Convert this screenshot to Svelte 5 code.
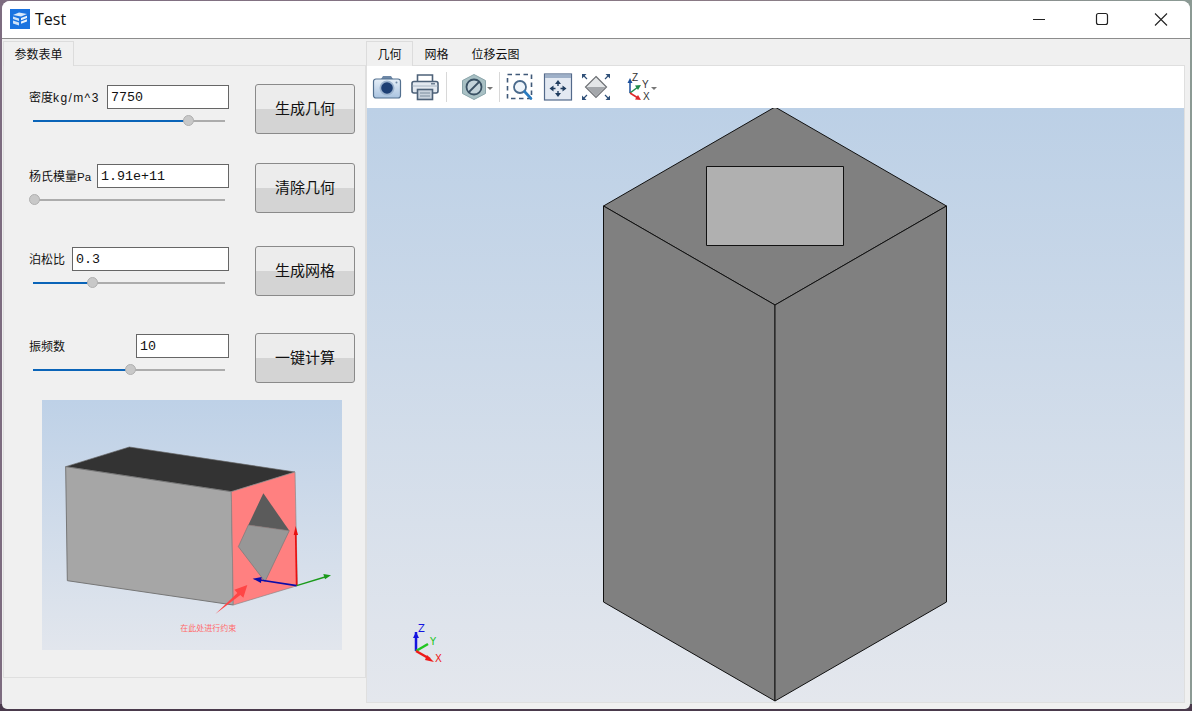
<script>
    // form rows on the left, gap is the space above each one
    const rows = [
        { label: '密度', unit: 'kg/m^3', stretch: true, value: '7750', inputW: 122, pct: 80, btn: '生成几何', gap: 18 },
        { label: '杨氏模量', unit: 'Pa', stretch: false, value: '1.91e+11', inputW: 132, pct: 0, btn: '清除几何', gap: 29 },
        { label: '泊松比', unit: '', stretch: false, value: '0.3', inputW: 157, pct: 30, btn: '生成网格', gap: 33 },
        { label: '振频数', unit: '', stretch: false, value: '10', inputW: 93, pct: 50, btn: '一键计算', gap: 37 }
    ];

    const viewTabs = ['几何', '网格', '位移云图'];
</script>

<div class="window">
    <header class="titlebar">
        <svg class="app-icon" viewBox="0 0 20 20" width="20" height="20">
            <rect width="20" height="20" fill="#1a73e0" />
            <path d="M3 6 L9 3.5 L17 5 L11 7.5 Z" fill="#d8e8fa" />
            <path d="M3 7.5 L9 9.5 V12 L3 10 Z M3 11.5 L9 13.5 V16.5 L3 14.5 Z" fill="#cfe2f8" />
            <path d="M11 9 L17 6.8 V9 L11 11.2 Z M11 12.5 L17 10.3 V12.5 L11 14.7 Z" fill="#e8f2fc" />
        </svg>
        <span class="title">Test</span>
        <div class="caption">
            <svg viewBox="0 0 58 37" width="58" height="37"><path d="M18 18.5 H30" stroke="#222" stroke-width="1.2" /></svg>
            <svg viewBox="0 0 58 37" width="58" height="37"><rect x="23.5" y="12.5" width="11" height="11" rx="2" fill="none" stroke="#222" stroke-width="1.2" /></svg>
            <svg viewBox="0 0 58 37" width="58" height="37"><path d="M24 12.5 L36 24.5 M36 12.5 L24 24.5" stroke="#222" stroke-width="1.1" /></svg>
        </div>
    </header>

    <main class="content">
        <section class="left">
            <div class="tabs">
                <div class="tab active">参数表单</div>
            </div>
            <div class="pane form-pane">
                {#each rows as row}
                    <div class="row" style="margin-top: {row.gap}px">
                        <div class="fields">
                            <div class="field-line">
                                <span class="label">{row.label}<span class="unit" class:stretch={row.stretch}>{row.unit}</span></span>
                                <input class="num" value={row.value} style="width: {row.inputW}px" readonly />
                            </div>
                            <div class="slider">
                                <div class="fill" style="width: {row.pct}%"></div>
                                <div class="knob" style="left: {row.pct}%"></div>
                            </div>
                        </div>
                        <button class="action">{row.btn}</button>
                    </div>
                {/each}

                <svg class="hint" viewBox="36 15 900 750" width="300" height="250">
                    <defs>
                        <linearGradient id="hintbg" x1="0" y1="0" x2="0" y2="1">
                            <stop offset="0" stop-color="#bed1e7" />
                            <stop offset="1" stop-color="#e2e6ed" />
                        </linearGradient>
                    </defs>
                    <rect x="36" y="15" width="900" height="750" fill="url(#hintbg)" />
                    <polygon points="107,215 298,156 795,231 604,290" fill="#333" stroke="#666" stroke-width="2" />
                    <polygon points="107,215 604,290 610,630 112,557" fill="#a6a6a6" stroke="#777" stroke-width="3" />
                    <polygon points="604,290 795,231 802,572 610,630" fill="#ff8080" stroke="#888" stroke-width="2" />
                    <polygon points="700,295 778,407 655,390" fill="#5b5b5b" />
                    <polygon points="655,390 778,407 705,560 625,455" fill="#979797" stroke="#777" stroke-width="2" />
                    <path d="M800 572 L797 410" stroke="#e81010" stroke-width="5" />
                    <polygon points="797,393 791,420 804,420" fill="#e81010" />
                    <path d="M800 572 L690 555" stroke="#0c0ca8" stroke-width="5" />
                    <polygon points="668,551 695,546 693,564" fill="#0c0ca8" />
                    <path d="M800 572 L885 546" stroke="#1a9a1a" stroke-width="4" />
                    <polygon points="903,541 880,537 885,553" fill="#1a9a1a" />
                    <polygon points="556,657 622,594 613,584 652,570 640,608 631,600" fill="#ff4545" />
                    <text class="hint-text" x="535" y="707" text-anchor="middle">在此处进行约束</text>
                </svg>
            </div>
        </section>

        <section class="right">
            <div class="tabs">
                {#each viewTabs as t, i}
                    <div class="tab" class:active={i === 0}>{t}</div>
                {/each}
            </div>
            <div class="pane view-pane">
                <div class="toolbar">
                    <!-- camera -->
                    <div class="tool">
                        <svg viewBox="0 0 30 28" width="30" height="28">
                            <defs>
                                <linearGradient id="cam" x1="0" y1="0" x2="0" y2="1">
                                    <stop offset="0" stop-color="#e6eff8" />
                                    <stop offset="1" stop-color="#a9c3e0" />
                                </linearGradient>
                            </defs>
                            <path d="M9 6 L11 3 H19 L21 6 Z" fill="#6d87a6" />
                            <rect x="1.5" y="6" width="27" height="19" rx="2.5" fill="url(#cam)" stroke="#53708f" stroke-width="1.2" />
                            <circle cx="15" cy="15" r="7.5" fill="#9db4cf" />
                            <circle cx="15" cy="15" r="5.8" fill="#1d3f74" />
                            <circle cx="24.5" cy="9.5" r="1" fill="#6d87a6" />
                        </svg>
                    </div>
                    <!-- printer -->
                    <div class="tool">
                        <svg viewBox="0 0 30 28" width="30" height="28">
                            <path d="M7.5 9 V2 H22.5 V9" fill="#fff" stroke="#4d6178" stroke-width="1.6" />
                            <rect x="2" y="8.5" width="26" height="11.5" rx="2" fill="#e3e9f0" stroke="#4d6178" stroke-width="1.6" />
                            <path d="M2.5 13 H27.5" stroke="#a9b6c4" stroke-width="1" />
                            <rect x="21" y="10" width="4" height="1.5" fill="#6d7f92" />
                            <rect x="7.5" y="16.5" width="15" height="10" fill="#c9d3dd" stroke="#4d6178" stroke-width="1.6" />
                            <path d="M10 20 H20 M10 23 H20" stroke="#7d8d9e" stroke-width="1.2" />
                        </svg>
                    </div>
                    <div class="sep"></div>
                    <!-- display mode -->
                    <div class="tool wide">
                        <svg viewBox="0 0 26 28" width="26" height="28">
                            <polygon points="13,1.5 24.5,7.5 24.5,20.5 13,26.5 1.5,20.5 1.5,7.5" fill="#a8c0c4" stroke="#8aa5aa" />
                            <circle cx="13" cy="14" r="7.5" fill="#c3d3da" stroke="#3a5164" stroke-width="1.8" />
                            <path d="M8 19 L18 9" stroke="#3a5164" stroke-width="1.8" />
                        </svg>
                        <span class="caret"></span>
                    </div>
                    <div class="sep"></div>
                    <!-- zoom box -->
                    <div class="tool">
                        <svg viewBox="0 0 30 28" width="30" height="28">
                            <rect x="2.5" y="1.5" width="24" height="24" fill="none" stroke="#3f5878" stroke-width="1.6" stroke-dasharray="4.5 3.5" />
                            <circle cx="15" cy="14" r="6" fill="#eef4fa" stroke="#4a6a8c" stroke-width="1.8" />
                            <path d="M19.5 18.5 L26 25.5" stroke="#2a7cc0" stroke-width="2.6" stroke-linecap="round" />
                        </svg>
                    </div>
                    <!-- pan, this one is toggled on -->
                    <div class="tool">
                        <svg viewBox="0 0 30 28" width="30" height="28">
                            <rect x="1.5" y="1" width="27" height="26" fill="#e3e9f2" stroke="#53698a" stroke-width="1.2" />
                            <rect x="2" y="1.5" width="26" height="3.5" fill="#9eb0c8" />
                            <path d="M15 9 V13 M15 18 V22 M8.5 15.5 H12.5 M17.5 15.5 H21.5" stroke="#1f3c5f" stroke-width="1.4" />
                            <path d="M15 7 L12 11 H18 Z M15 24 L12 20 H18 Z M6.5 15.5 L10.5 12.5 V18.5 Z M23.5 15.5 L19.5 12.5 V18.5 Z" fill="#1f3c5f" />
                        </svg>
                    </div>
                    <!-- fit all -->
                    <div class="tool">
                        <svg viewBox="0 0 30 28" width="30" height="28">
                            <polygon points="15,3.5 25.5,14 15,24.5 4.5,14" fill="#e4e6e8" stroke="#6d7074" stroke-width="1.2" />
                            <polygon points="5.5,14 24.5,14 15,23.5" fill="#a4a7ab" />
                            <path d="M1 1 L5.5 1 L1 5.5 Z M29 1 L24.5 1 L29 5.5 Z M1 27 L5.5 27 L1 22.5 Z M29 27 L24.5 27 L29 22.5 Z" fill="#2f5078" />
                            <path d="M3 3 L6 6 M27 3 L24 6 M3 25 L6 22 M27 25 L24 22" stroke="#2f5078" stroke-width="1.2" />
                        </svg>
                    </div>
                    <!-- triad dropdown -->
                    <div class="tool triad">
                        <svg class="tri-icon" viewBox="0 0 30 28" width="30" height="28">
                            <path d="M4 20 V8" stroke="#1b4f9c" stroke-width="1.5" />
                            <polygon points="4,5 1.5,10 6.5,10" fill="#1b4f9c" />
                            <path d="M4 20 L12 14" stroke="#1f8a4a" stroke-width="1.5" />
                            <polygon points="15,12 9,12.5 12,17" fill="#1f8a4a" />
                            <path d="M4 20 L12 25" stroke="#e02828" stroke-width="1.5" />
                            <polygon points="15,27 9,26.5 12,22" fill="#e02828" />
                            <text class="tri-label" x="6" y="8">Z</text>
                            <text class="tri-label" x="16" y="15">Y</text>
                            <text class="tri-label" x="17" y="27">X</text>
                        </svg>
                        <span class="caret"></span>
                    </div>
                </div>

                <svg class="canvas" viewBox="367 108 817 594" preserveAspectRatio="none">
                    <defs>
                        <linearGradient id="viewbg" x1="0" y1="0" x2="0" y2="1">
                            <stop offset="0" stop-color="#bcd0e6" />
                            <stop offset="1" stop-color="#e4e7ed" />
                        </linearGradient>
                    </defs>
                    <rect x="367" y="108" width="817" height="594" fill="url(#viewbg)" />
                    <g stroke="#111" stroke-width="1" stroke-linejoin="round">
                        <polygon points="775,107 946.5,206 775,305 603.5,206" fill="#808080" />
                        <polygon points="603.5,206 775,305 775,701 603.5,602" fill="#808080" />
                        <polygon points="775,305 946.5,206 946.5,602 775,701" fill="#808080" />
                        <rect x="706.5" y="166.5" width="137" height="79" fill="#b0b0b0" />
                    </g>
                    <!-- corner triad -->
                    <path d="M416 651 V632" stroke="#1414e0" stroke-width="2.5" />
                    <polygon points="416,632 413,638 419,638" fill="#1414e0" />
                    <path d="M416 651 L428 644" stroke="#22c622" stroke-width="2.5" />
                    <path d="M416 651 L430 659" stroke="#ee1a1a" stroke-width="2.5" />
                    <polygon points="434,662 427,655 425,660" fill="#ee1a1a" />
                    <text class="axis" x="418" y="632" fill="#1414e0">Z</text>
                    <text class="axis" x="430" y="645" fill="#22c622">Y</text>
                    <text class="axis" x="435" y="662" fill="#ee1a1a">X</text>
                </svg>
            </div>
        </section>
    </main>
</div>

<style>
    :global(body) {
        margin: 0;
        background:
            linear-gradient(transparent 99%, #4a3a4c 99%),
            linear-gradient(90deg, #7d6c80, #8a7a85 60%, #8b9a94);
        height: 711px;
        overflow: hidden;
    }

    .window {
        width: 1188px;
        height: 708px;
        margin: 1px 2px 0;
        background: #f0f0f0;
        border-radius: 8px 8px 5px 5px;
        overflow: hidden;
        display: flex;
        flex-direction: column;
        font-family: "Noto Sans CJK SC", "Liberation Sans", sans-serif;
    }

    .titlebar {
        height: 37px;
        flex: none;
        background: #fff;
        border-bottom: 1px solid #8c8c8c;
        display: flex;
        align-items: center;
        padding-left: 8px;
    }

    .app-icon {
        flex: none;
        margin-bottom: 1px;
    }

    .title {
        margin-left: 5px;
        margin-bottom: 2px;
        font-family: "Open Sans", "Noto Sans", sans-serif;
        font-size: 16px;
        color: #111;
    }

    .caption {
        margin-left: auto;
        display: flex;
        margin-right: 1px;
    }

    .content {
        flex: 1;
        display: flex;
        min-height: 0;
    }

    .left {
        width: 363px;
        margin-left: 1px;
        flex: none;
        display: flex;
        flex-direction: column;
    }

    .right {
        flex: 1;
        margin-right: 5px;
        display: flex;
        flex-direction: column;
    }

    .tabs {
        display: flex;
        height: 26px;
        padding-top: 1px;
        box-sizing: border-box;
        flex: none;
        position: relative;
        top: 1px;
    }

    .tab {
        font-size: 12px;
        line-height: 23px;
        color: #111;
        border: 1px solid transparent;
        border-bottom: none;
    }

    .left .tab {
        width: 71px;
        box-sizing: border-box;
        text-align: center;
    }

    .tab.active {
        background: #f0f0f0;
        border-color: #dcdcdc;
    }

    .right .tab {
        padding: 0 10.5px;
    }

    .pane {
        border: 1px solid #dfdfdf;
        background: #f0f0f0;
    }

    .form-pane {
        height: 613px;
        box-sizing: border-box;
        display: flex;
        flex-direction: column;
    }

    .row {
        display: flex;
        justify-content: space-between;
        padding: 0 9px 0 25px;
        height: 50px;
        flex: none;
    }

    .fields {
        width: 200px;
        padding-top: 1px;
    }

    .field-line {
        display: flex;
        justify-content: space-between;
        align-items: center;
        height: 24px;
    }

    .label {
        font-size: 12px;
        color: #111;
        white-space: nowrap;
        position: relative;
        top: -1px;
    }

    .unit {
        font-family: "Liberation Sans", sans-serif;
        font-size: 11.5px;
    }

    .unit.stretch {
        font-size: 12px;
        letter-spacing: 1.4px;
    }

    .num {
        box-sizing: border-box;
        height: 24px;
        border: 1px solid #666;
        border-radius: 0;
        background: #fff;
        padding: 0 3px;
        font-family: "Liberation Mono", monospace;
        font-size: 13.33px;
        color: #111;
        outline: none;
    }

    .slider {
        position: relative;
        height: 2px;
        margin: 11px 0 0 4px;
        width: 192px;
        background: #acacac;
    }

    .fill {
        height: 100%;
        background: #0a64b8;
    }

    .knob {
        position: absolute;
        top: -5px;
        width: 11px;
        height: 11px;
        margin-left: -4px;
        box-sizing: border-box;
        border-radius: 50%;
        border: 1px solid #b0b0b0;
        background: #c8c8c8;
    }

    .action {
        width: 100px;
        height: 50px;
        box-sizing: border-box;
        border: 1px solid #8a8a8a;
        border-radius: 3px;
        background: linear-gradient(#ececec 0 50%, #d4d4d4 50%);
        font-family: inherit;
        font-size: 15px;
        color: #111;
        padding: 0 0 3px;
        position: relative;
        left: -1px;
    }

    .hint {
        display: block;
        flex: none;
        margin: 17px 0 0 38px;
    }

    .hint-text {
        font-size: 24px;
        fill: #ff6a6a;
    }

    .view-pane {
        height: 638px;
        box-sizing: border-box;
        display: flex;
        flex-direction: column;
        flex: none;
    }

    .toolbar {
        height: 42px;
        flex: none;
        background: #fff;
        display: flex;
        align-items: center;
        padding-left: 1px;
    }

    .tool {
        width: 38px;
        height: 42px;
        flex: none;
        display: flex;
        align-items: center;
        justify-content: center;
        position: relative;
    }

    .tool.wide {
        width: 49px;
        justify-content: flex-start;
        padding-left: 13px;
        box-sizing: border-box;
    }

    .tool.wide .caret {
        right: 4px;
    }

    .tool.triad {
        width: 48px;
        justify-content: flex-start;
        padding-left: 11px;
        box-sizing: border-box;
    }

    .tri-icon {
        overflow: visible;
    }

    .caret {
        position: absolute;
        top: 21px;
        right: 6px;
        border-left: 3px solid transparent;
        border-right: 3px solid transparent;
        border-top: 3px solid #777;
    }

    .sep {
        width: 1px;
        height: 30px;
        background: #d8d8d8;
        margin: 0 1px 0 2px;
        flex: none;
    }

    .tri-label {
        font-family: "Liberation Sans", sans-serif;
        font-size: 10px;
        fill: #333;
    }

    .canvas {
        display: block;
        width: 100%;
        flex: 1;
        min-height: 0;
    }

    .axis {
        font-family: "DejaVu Sans", sans-serif;
        font-size: 10px;
    }
</style>
